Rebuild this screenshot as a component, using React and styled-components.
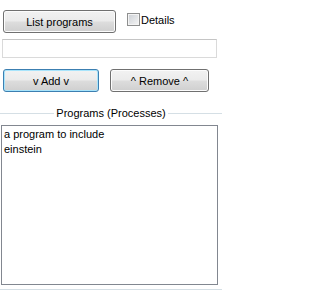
import React, { useState } from "react"
import styled, { createGlobalStyle, css } from "styled-components"

const GlobalStyle = createGlobalStyle`
  html, body {
    margin: 0;
    padding: 0;
    background: #ffffff;
  }
  body {
    font-family: "Liberation Sans", Arial, sans-serif;
    font-size: 11px;
    color: #000000;
  }
`

const Panel = styled.div`
  width: 222px;
  height: 296px;
  display: flex;
  flex-direction: column;
  overflow: hidden;
`

const TopRow = styled.div`
  display: flex;
  align-items: flex-start;
  padding: 10px 0 0 3px;
`

const Button = styled.button`
  box-sizing: border-box;
  width: ${p => p.$width}px;
  height: 23px;
  padding: 0;
  font-family: inherit;
  font-size: 11px;
  color: #000;
  border: 1px solid #707070;
  border-radius: 3px;
  background: linear-gradient(#f2f2f2 0%, #ebebeb 48%, #dddddd 52%, #cfcfcf 100%);
  box-shadow: inset 0 0 0 1px #fcfcfc;

  ${p => p.$focused && css`
    border-color: #3c7fb1;
    box-shadow: inset 0 0 0 1px #a8e4fb;
  `}
`

const CheckLabel = styled.label`
  display: flex;
  align-items: center;
  margin: 3px 0 0 11px;
  gap: 1px;
  height: 13px;
`

const Box = styled.span`
  box-sizing: border-box;
  width: 13px;
  height: 13px;
  border: 1px solid #8e8f8f;
  background: linear-gradient(135deg, #cbcfd5 0%, #f6f6f6 100%);
  box-shadow: inset 0 0 0 1px #f4f4f4;
`

const TextBox = styled.input`
  box-sizing: border-box;
  display: block;
  width: 215px;
  height: 19px;
  margin: 6px 0 0 2px;
  border: 1px solid #dadada;
  border-top-color: #c5c5c5;
  background: #fff;
  outline: none;
  padding: 0 2px;
  font-family: inherit;
  font-size: 11px;
`

const ButtonRow = styled.div`
  display: flex;
  gap: 11px;
  padding-left: 3px;
  margin-top: 11px;
`

const Group = styled.div`
  margin-top: 15px;
  border-bottom: 1px solid #d5dfe5;
  padding-bottom: 4px;
`

const GroupTitle = styled.div`
  display: flex;
  align-items: center;
  height: 13px;
  line-height: 13px;
  gap: 2px;

  &::before, &::after {
    content: "";
    flex: 1;
    height: 1px;
    background: #d5dfe5;
  }
`

const ListBox = styled.ul`
  box-sizing: border-box;
  list-style: none;
  width: 217px;
  height: 160px;
  margin: 5px 0 0 1px;
  padding: 1px 0 0 2px;
  border: 1px solid #828790;
  background: #fff;
`

const ListItem = styled.li`
  height: 15px;
  line-height: 15px;
  white-space: nowrap;
`

export default function App() {
  const [programs] = useState(["a program to include", "einstein"])

  return (
    <>
      <GlobalStyle />
      <Panel>
        <TopRow>
          <Button $width={113}>List programs</Button>
          <CheckLabel>
            <Box />
            <span>Details</span>
          </CheckLabel>
        </TopRow>

        <TextBox type="text" />

        <ButtonRow>
          <Button $width={96} $focused>v Add v</Button>
          <Button $width={99}>^ Remove ^</Button>
        </ButtonRow>

        <Group>
          <GroupTitle>Programs (Processes)</GroupTitle>
          <ListBox>
            {programs.map(p => <ListItem key={p}>{p}</ListItem>)}
          </ListBox>
        </Group>
      </Panel>
    </>
  )
}
